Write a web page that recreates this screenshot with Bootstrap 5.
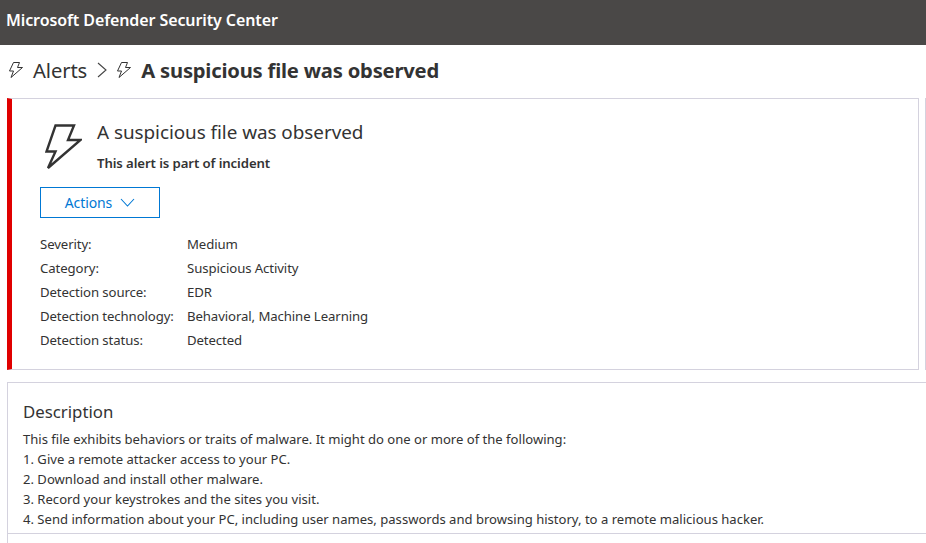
<!doctype html>
<html lang="en"><head><meta charset="utf-8"><title>Alert</title>
<link rel="stylesheet" href="https://cdn.jsdelivr.net/npm/bootstrap@5.3.0/dist/css/bootstrap.min.css">
<style>
html,body{height:543px;overflow:hidden;background:#fff}
body{font-family:"Noto Sans","Open Sans",sans-serif;color:#333;width:926px}
.topbar{height:45px;background:#4a4847;color:#fff;font-size:16px;font-weight:600;padding:0 6px 6px;letter-spacing:-.1px}
.crumbs{height:53px;padding-left:8px;padding-bottom:3px;font-size:20.2px;color:#333}
.crumbs .now{font-weight:700;letter-spacing:-.2px;margin-left:9px}
.crumb-link{margin-left:9px;letter-spacing:-.1px}
.sep{margin:0 9px 0 10px}
.alert-row{height:272px;gap:6px;margin-left:7px}
.alert-box{width:912px;flex:none;border:1px solid #d4d2de;border-left:5px solid #e00000;padding:21px 28px 0 28px}
.next-box{flex:none;width:1px;background:#d4d2de}
.big-bolt{margin-left:5px;margin-right:15px;margin-top:4px;flex:none}
.alert-title{font-size:18.9px;line-height:24px;margin:0 0 10px;font-weight:400;letter-spacing:-.05px}
.alert-sub{font-size:13.2px;line-height:18px;font-weight:600;letter-spacing:-.1px}
.act-btn{width:120px;height:31px;border:1px solid #0078d4;border-radius:0;color:#0078d4;font-size:14px;padding:0;margin-top:15px;background:#fff;letter-spacing:-.1px}
.facts{font-size:13.2px;line-height:24px;margin-top:14px;letter-spacing:-.1px}
.fact-k{width:147px;flex:none}
.desc-box{margin:12px 0 0 7px;width:919px;border:1px solid #d4d2de;border-right:0;border-bottom:0;height:161px;padding-top:16px}
.desc-head{font-size:16.8px;line-height:26px;margin:0 0 4px 15px;font-weight:400}
.desc-text{font-size:13.07px;line-height:20px;margin:0 0 0 15px;padding-bottom:4px}
.desc-rule{border-top:1px solid #d4d2de}
</style></head><body>
<div class="topbar d-flex align-items-center">Microsoft Defender Security Center</div>
<div class="crumbs d-flex align-items-center">
<svg width="16" height="18" viewBox="0 0 16 18" fill="none" stroke="#333" stroke-width="1"><path d="M5.500 1.500h6L9.500 6.500h5L3 16.500l2.500-6.500H1.500z"/></svg>
<span class="crumb-link">Alerts</span>
<svg class="sep" width="10" height="16" viewBox="0 0 10 16" fill="none" stroke="#444" stroke-width="1.1"><path d="M1 1l8 7-8 7"/></svg>
<svg width="16" height="18" viewBox="0 0 16 18" fill="none" stroke="#333" stroke-width="1"><path d="M5.500 1.500h6L9.500 6.500h5L3 16.500l2.500-6.500H1.500z"/></svg>
<span class="now">A suspicious file was observed</span>
</div>
<div class="alert-row d-flex">
<section class="alert-box">
<div class="d-flex">
<svg class="big-bolt" width="37" height="46" viewBox="0 0 37 46" fill="none" stroke="#333" stroke-width="2.4"><path d="M10.500 1.500h18.500l-6 14.500h12.500L3 44l7.500-16.500H1.500z"/></svg>
<div><h2 class="alert-title">A suspicious file was observed</h2><div class="alert-sub">This alert is part of incident</div></div>
</div>
<button type="button" class="btn act-btn d-flex align-items-center justify-content-center gap-2">Actions
<svg width="15" height="9" viewBox="0 0 15 9" fill="none" stroke="#0078d4" stroke-width="1.1"><path d="M1 1l6.500 7L14 1"/></svg></button>
<div class="facts">
<div class="d-flex"><div class="fact-k">Severity:</div><div>Medium</div></div>
<div class="d-flex"><div class="fact-k">Category:</div><div>Suspicious Activity</div></div>
<div class="d-flex"><div class="fact-k">Detection source:</div><div>EDR</div></div>
<div class="d-flex"><div class="fact-k">Detection technology:</div><div>Behavioral, Machine Learning</div></div>
<div class="d-flex"><div class="fact-k">Detection status:</div><div>Detected</div></div>
</div>
</section>
<div class="next-box"></div>
</div>
<section class="desc-box">
<h3 class="desc-head">Description</h3>
<p class="desc-text">This file exhibits behaviors or traits of malware. It might do one or more of the following:<br>1. Give a remote attacker access to your PC.<br>2. Download and install other malware.<br>3. Record your keystrokes and the sites you visit.<br>4. Send information about your PC, including user names, passwords and browsing history, to a remote malicious hacker.</p>
<div class="desc-rule"></div>
</section>
<script src="https://cdn.jsdelivr.net/npm/bootstrap@5.3.0/dist/js/bootstrap.bundle.min.js"></script>
</body></html>
